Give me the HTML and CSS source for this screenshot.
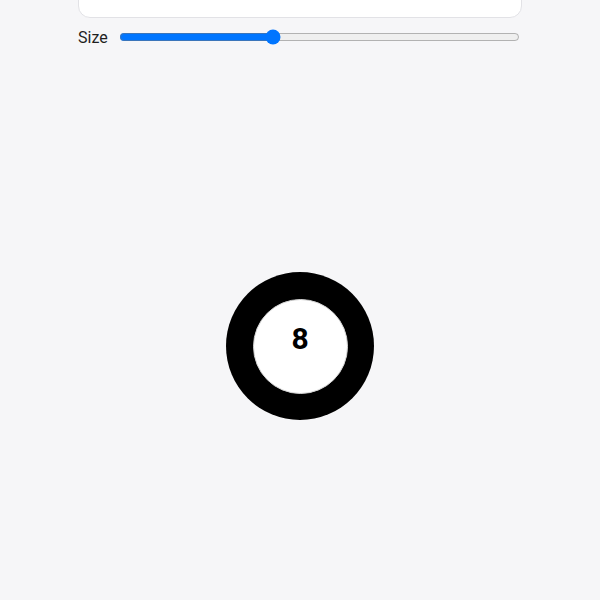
FILE: index.html
```html
<!DOCTYPE html>
<html>
<head>
<meta charset="utf-8">
<link rel="stylesheet" href="styles.css">
</head>
<body>
<div class="page">
  <div class="panel"></div>
  <div class="control">
    <label class="label" for="size">Size</label>
    <input class="slider" id="size" type="range" min="0" max="100" value="38">
  </div>
  <div class="stage">
    <div class="ring">
      <div class="face"><span class="num">8</span></div>
    </div>
  </div>
</div>
</body>
</html>
```
FILE: styles.css
```css
html, body {
  margin: 0;
  padding: 0;
  background: #f6f6f8;
  font-family: Roboto, "Noto Sans", sans-serif;
  color: #1f1f1f;
}
.page {
  width: 444px;
  margin: 0 auto;
  display: flex;
  flex-direction: column;
}
.panel {
  height: 60px;
  margin-top: -44px;
  background: #fff;
  border: 1px solid #e2e2e6;
  border-radius: 12px;
}
.control {
  display: flex;
  align-items: center;
  gap: 11px;
  margin-top: 7px;
  height: 24px;
}
.label {
  font-size: 16px;
}
.slider {
  flex: 1;
  margin: 0 2px 0 0;
}
.stage {
  padding-top: 223px;
  display: flex;
  justify-content: center;
}
.ring {
  width: 148px;
  height: 148px;
  border-radius: 50%;
  background: #000;
  display: flex;
  align-items: center;
  justify-content: center;
}
.face {
  width: 95px;
  height: 95px;
  border-radius: 50%;
  background: #fff;
  border: 1px solid #d4d4d4;
  display: flex;
  justify-content: center;
  padding-top: 24px;
  box-sizing: border-box;
}
.num {
  font-size: 30px;
  font-weight: 700;
  line-height: 1;
  color: #000;
}
```
